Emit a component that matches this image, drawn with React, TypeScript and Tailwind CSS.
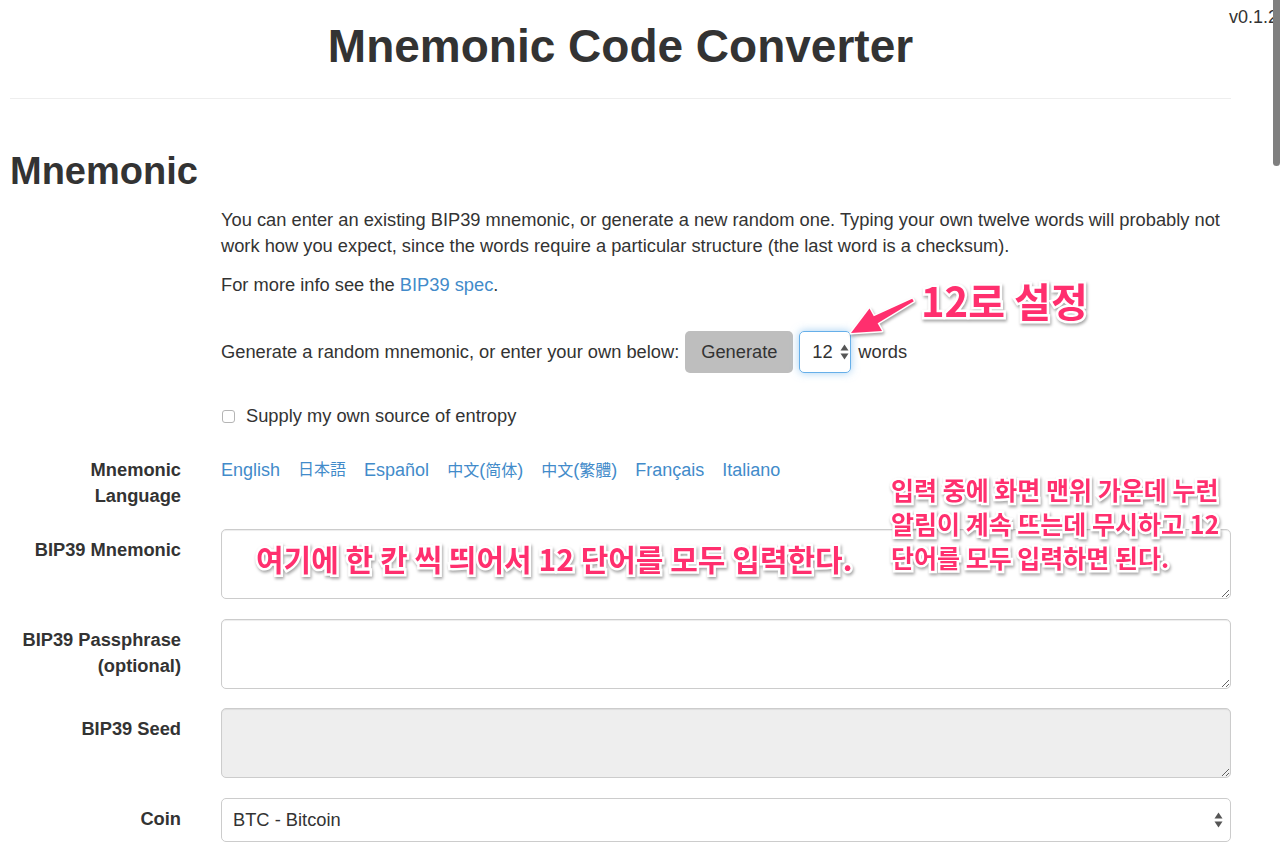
import React from "react";

const sans = "font-['Liberation_Sans','Noto_Sans_CJK_SC',sans-serif]";
const note =
  "absolute font-['Noto_Sans_CJK_KR',sans-serif] font-bold text-[#ff2f6e] [-webkit-text-stroke:5px_#ffffff] [paint-order:stroke_fill] [filter:drop-shadow(1px_2px_1.5px_rgba(0,0,0,0.35))] whitespace-nowrap";

function UpDown() {
  return (
    <svg width="9" height="16" viewBox="0 0 9 16" className="shrink-0">
      <path d="M0.5 6.5 L4.5 0.5 L8.5 6.5 Z" fill="#555" />
      <path d="M0.5 9.5 L4.5 15.5 L8.5 9.5 Z" fill="#555" />
    </svg>
  );
}

function Row({ label, children, className = "" }: { label: React.ReactNode; children: React.ReactNode; className?: string }) {
  return (
    <div className={"flex gap-[40px] " + className}>
      <div className="w-[171px] shrink-0 text-right font-bold text-[18.3px] leading-[26px] text-[#333] pt-[8px]">{label}</div>
      <div className="flex-1 min-w-0">{children}</div>
    </div>
  );
}

const ta =
  "block w-full h-[70px] rounded-[5px] border border-[#ccc] shadow-[inset_0_1px_1px_rgba(0,0,0,0.075)] outline-none";

const cjk = "text-[16px]";

export default function App() {
  return (
    <div className={"relative w-[1280px] h-[855px] overflow-hidden bg-white text-[#333] " + sans}>
      <div className="absolute right-[2px] top-[4px] text-[18px] leading-[26px] text-[#333]">v0.1.2</div>
      <div className="absolute left-[1273px] top-0 w-[7px] h-[166px] rounded-b-full bg-[#7f7f7f]" />

      <div className="w-[1241px] px-[10px]">
        <h1 className="mt-[21px] text-center text-[46px] leading-[51px] font-bold text-[#333]">Mnemonic Code Converter</h1>
        <hr className="mt-[26px] border-0 border-t border-[#eee]" />
        <h2 className="mt-[51px] text-[38px] leading-[43px] font-bold text-[#333]">Mnemonic</h2>

        <div className="pl-[211px] text-[18.3px] leading-[26px]">
          <p className="mt-[14px]">
            You can enter an existing BIP39 mnemonic, or generate a new random one. Typing your own twelve words will probably not
            work how you expect, since the words require a particular structure (the last word is a checksum).
          </p>
          <p className="mt-[13px]">
            For more info see the <span className="text-[#428bca]">BIP39 spec</span>.
          </p>
          <div className="mt-[33px] flex items-center">
            <span>Generate a random mnemonic, or enter your own below:</span>
            <div className="ml-[6px] h-[42px] w-[108px] rounded-[5px] bg-[#bebebe] flex items-center justify-center text-[#333]">Generate</div>
            <div className="ml-[6px] h-[42px] w-[52px] rounded-[5px] border border-[#66afe9] shadow-[0_0_8px_rgba(102,175,233,0.6)] flex items-center pl-[12px] gap-[7px]">
              <span>12</span>
              <UpDown />
            </div>
            <span className="ml-[7px]">words</span>
          </div>
          <div className="mt-[30px] flex items-center">
            <div className="w-[13px] h-[13px] rounded-[3px] border border-[#b5b5b5] bg-white ml-[1px]" />
            <span className="ml-[11px]">Supply my own source of entropy</span>
          </div>
        </div>

        <div className="mt-[28px] flex gap-[40px]">
          <div className="w-[171px] shrink-0 text-right font-bold text-[18.3px] leading-[26px]">
            Mnemonic
            <br />
            Language
          </div>
          <div className="flex gap-[18px] text-[18px] leading-[26px] text-[#428bca]">
            <span>English</span>
            <span className={cjk + " font-['Liberation_Sans','Noto_Sans_CJK_JP',sans-serif]"}>日本語</span>
            <span>Español</span>
            <span>
              <span className={cjk}>中文</span>(<span className={cjk}>简体</span>)
            </span>
            <span className="font-['Liberation_Sans','Noto_Sans_CJK_TC',sans-serif]">
              <span className={cjk}>中文</span>(<span className={cjk}>繁體</span>)
            </span>
            <span>Français</span>
            <span>Italiano</span>
          </div>
        </div>

        <Row label="BIP39 Mnemonic" className="mt-[20px]">
          <textarea className={ta + " bg-white"} />
        </Row>
        <Row label={<>BIP39 Passphrase<br />(optional)</>} className="mt-[20px]">
          <textarea className={ta + " bg-white"} />
        </Row>
        <Row label="BIP39 Seed" className="mt-[19px]">
          <textarea readOnly className={ta + " bg-[#eee]"} />
        </Row>
        <Row label="Coin" className="mt-[20px]">
          <div className="h-[44px] rounded-[5px] border border-[#ccc] flex items-center justify-between pl-[11px] pr-[7px] text-[18.3px]">
            <span>BTC - Bitcoin</span>
            <UpDown />
          </div>
        </Row>
      </div>

      {/* annotations */}
      <svg className="absolute left-[840px] top-[290px] [filter:drop-shadow(1px_2px_1.5px_rgba(0,0,0,0.35))]" width="90" height="55" viewBox="0 0 90 55">
        <path
          d="M11 43 L42 41 L37.6 33.3 L73.8 11.2 L72.2 8.8 L33.8 26.3 L29.5 18.5 Z"
          fill="#ff2f6e"
          stroke="#fff"
          strokeWidth="3"
          strokeLinejoin="round"
          style={{ paintOrder: "stroke fill" }}
        />
      </svg>
      <div className={note + " left-[921px] top-[276px] text-[40px] leading-[48px]"}>12로 설정</div>
      <div className={note + " left-[256px] top-[538px] text-[30px] leading-[40px]"}>여기에 한 칸 씩 띄어서 12 단어를 모두 입력한다.</div>
      <div className={note + " left-[891px] top-[472px] text-[25px] leading-[34px]"}>
        입력 중에 화면 맨위 가운데 누런
        <br />
        알림이 계속 뜨는데 무시하고 12
        <br />
        단어를 모두 입력하면 된다.
      </div>
    </div>
  );
}
